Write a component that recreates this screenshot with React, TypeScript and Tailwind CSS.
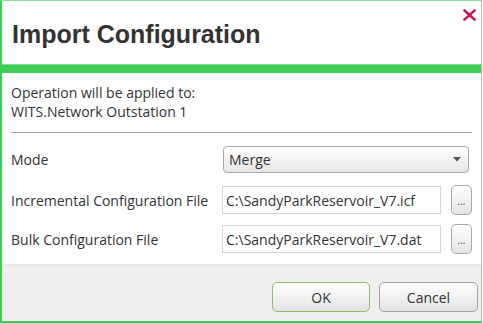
import React from "react";

const bodyFont = { fontFamily: '"Open Sans", "Noto Sans", sans-serif' };

// Small "..." browse button next to the path inputs
function BrowseButton() {
    return (
        <button className="w-[21px] h-[30px] rounded-[5px] border border-[#a8a8a8] bg-gradient-to-b from-white to-[#e4e4e4] flex items-end justify-center pb-[8px] text-[10px] leading-none text-[#444]">
            ...
        </button>
    );
}

function PathRow({ label, value }: { label: string; value: string }) {
    return (
        <div className="flex items-center h-[30px]">
            <span className="w-[211px] text-[14px] text-[#333]">{label}</span>
            <div className="w-[219px] h-[28px] border border-[#d4d4d4] bg-white flex items-center px-[3px] text-[14px] text-[#333]">
                {value}
            </div>
            <div className="ml-[10px]">
                <BrowseButton />
            </div>
        </div>
    );
}

export default function App() {
    return (
        <div
            className="w-[482px] h-[323px] bg-white flex flex-col border-t border-r border-[#8fdc9c] border-l-2 border-l-[#3ccf55] border-b-2 border-b-[#3ccf55]"
            style={bodyFont}
        >
            {/* Header */}
            <div className="relative h-[63px] shrink-0 pl-[10px] pt-[18px]">
                <h1
                    className="text-[25px] font-bold leading-[30px] text-[#333]"
                    style={{ fontFamily: '"Liberation Sans", Arial, sans-serif' }}
                >
                    Import Configuration
                </h1>
                <button className="absolute right-[5px] top-[8px] w-[13px] h-[12px]">
                    <svg viewBox="0 0 13 12" width="13" height="12">
                        <path d="M1.5 1.5 L11.5 10.5 M11.5 1.5 L1.5 10.5" stroke="#c8174f" strokeWidth="2.4" strokeLinecap="square" />
                    </svg>
                </button>
            </div>
            <div className="h-[9px] shrink-0 border-t border-[#8fdc9c] bg-[#40cd5a]" />

            {/* Body */}
            <div className="px-[9px] pt-[10px]">
                <div className="text-[14px] leading-[19px] text-[#333]">
                    <p>Operation will be applied to:</p>
                    <p>WITS.Network Outstation 1</p>
                </div>
                <div className="mt-[11px] border-t border-[#a5a5a5]" />

                <div className="mt-[12px] flex items-center h-[28px]">
                    <span className="w-[212px] text-[14px] text-[#333]">Mode</span>
                    <div className="w-[246px] h-[27px] rounded-[4px] border border-[#a9a9a9] bg-gradient-to-b from-white to-[#e6e6e6] flex items-center justify-between pl-[5px] pr-[7px] text-[14px] text-[#333]">
                        <span>Merge</span>
                        <svg viewBox="0 0 8 5" width="8" height="5">
                            <path d="M0 0 H8 L4 4.5 Z" fill="#555" />
                        </svg>
                    </div>
                </div>

                <div className="mt-[12px] flex flex-col gap-[9px]">
                    <PathRow label="Incremental Configuration File" value="C:\SandyParkReservoir_V7.icf" />
                    <PathRow label="Bulk Configuration File" value="C:\SandyParkReservoir_V7.dat" />
                </div>
            </div>

            {/* Footer */}
            <div className="mt-auto h-[57px] border-t-[3px] border-[#e8e8e8] bg-[#efefef] flex items-start justify-end gap-[9px] pt-[15px] pr-[3px]">
                <button className="w-[98px] h-[30px] rounded-[5px] border border-[#8cc063] bg-gradient-to-b from-white to-[#e3e3e3] text-[14px] text-[#333]">
                    OK
                </button>
                <button className="w-[99px] h-[30px] rounded-[5px] border border-[#a0a0a0] bg-gradient-to-b from-white to-[#e3e3e3] text-[14px] text-[#333]">
                    Cancel
                </button>
            </div>
        </div>
    );
}
